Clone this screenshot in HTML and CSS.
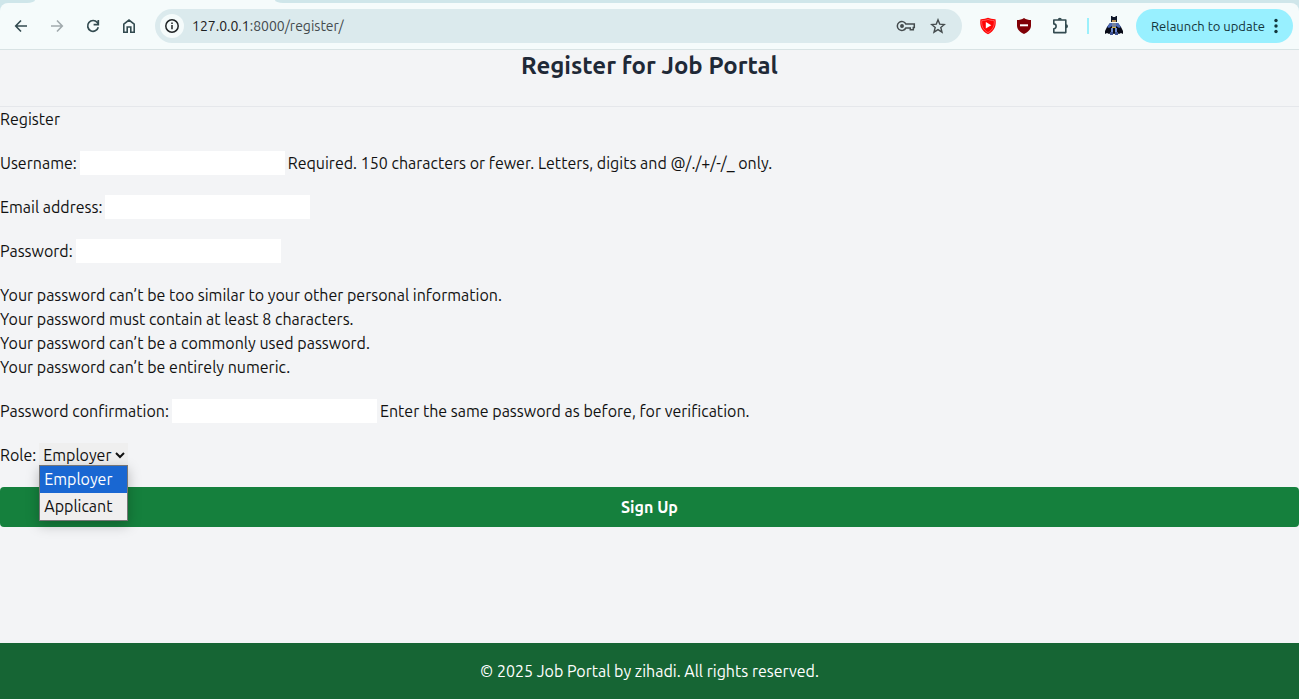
FILE: index.html
```html
<!DOCTYPE html>
<html lang="en">
<head>
<meta charset="utf-8">
<title>Register for Job Portal</title>
<link rel="stylesheet" href="styles.css">
</head>
<body>
<div class="browser">
  <div class="tabstrip"><span class="tab-left"></span><span class="tab-right"></span></div>
  <div class="toolbar">
    <nav class="nav-buttons" aria-label="Browser navigation">
      <button class="icon-button" type="button" aria-label="Back"><svg width="16" height="16" viewBox="0 0 16 16" fill="none" stroke="currentColor" stroke-width="1.6"><path d="M14 8H3M8 2.5 2.7 8 8 13.5"/></svg></button>
      <button class="icon-button muted" type="button" aria-label="Forward"><svg width="16" height="16" viewBox="0 0 16 16" fill="none" stroke="currentColor" stroke-width="1.6"><path d="M2 8h11M8 2.5 13.3 8 8 13.5"/></svg></button>
      <button class="icon-button" type="button" aria-label="Reload"><svg width="16" height="16" viewBox="0 0 16 16" fill="none" stroke="currentColor" stroke-width="1.7"><path d="M13.3 9.3A5.4 5.4 0 1 1 12.3 4.5L13.3 5.8M13.3 2v4.700H8.600"/></svg></button>
      <button class="icon-button" type="button" aria-label="Home"><svg width="16" height="16" viewBox="0 0 16 16" fill="none" stroke="currentColor" stroke-width="1.6"><path d="M2.8 14.2V6.2L8 2.1l5.2 4.1v8H9.8V9H6.2v5.2z"/></svg></button>
    </nav>
    <div class="address">
      <span class="site-info"><svg width="16" height="16" viewBox="0 0 16 16" fill="none" stroke="currentColor" stroke-width="1.5"><circle cx="8" cy="8" r="6.2"/><path d="M8 7v4.3M8 4.4v1.5"/></svg></span>
      <span class="url"><span class="host">127.0.0.1</span>:8000/register/</span>
      <svg class="key" width="20" height="16" viewBox="0 0 20 16" fill="none" stroke="currentColor" stroke-width="1.5"><path d="M9.9 6.1H18.300V9.600H17.300V11.800H14.300V9.900H9.900A4.500 4.500 0 1 1 9.900 6.100z"/><circle cx="6" cy="8" r="1.200" fill="currentColor"/></svg>
      <svg width="16" height="16" viewBox="0 0 16 16" fill="none" stroke="currentColor" stroke-width="1.4"><path d="m8 1.800 1.700 4.300 4.700.4-3.600 3 1.200 4.700L8 11.700l-4 2.500 1.200-4.700-3.600-3 4.700-.4z"/></svg>
    </div>
    <div class="extensions">
      <svg width="18" height="18" viewBox="0 0 18 18"><path d="M9 .8C11 1.8 14 2.3 16.5 2.2 17.6 8.5 15.5 14 9 17.2 2.5 14 .4 8.5 1.5 2.2 4 2.3 7 1.8 9 .8z" fill="#ff0505"/><path d="M9 2.4c2 .9 4 1.2 6.2 1.2.6 5-1.2 9.2-6.2 12-5-2.8-6.8-7-6.2-12C5 3.6 7 3.3 9 2.4z" fill="none" stroke="#ff8a8a" stroke-width=".6"/><path d="M6.8 5v6.4L12.3 8.2z" fill="#fff"/></svg>
      <svg width="18" height="18" viewBox="0 0 18 18"><path d="M9 1c2 1.5 4.5 2 7 2v5.5c0 4-3 6.500-7 8.500-4-2-7-4.500-7-8.500V3c2.500 0 5-.5 7-2z" fill="#800006"/><path d="M5 7.300h8v2H5z" fill="#fff"/></svg>
      <svg class="puzzle" width="18" height="18" viewBox="0 0 18 18" fill="none" stroke="currentColor" stroke-width="1.6"><path d="M2.8 3h12v12.600h-12v-3.900c3.100-.2 3.100-4.600 0-4.800z" stroke-linejoin="round"/><path d="M6.800 2.800a2 2 0 0 1 4 0zM15 7.300a2 2 0 0 1 0 4z" fill="currentColor" stroke="none"/></svg>
      <span class="divider"></span>
      <svg class="avatar" width="20" height="20" viewBox="0 0 20 20"><path d="M7 0h1l1 1h2l1-1h1v6H7z" fill="#10182a"/><path d="M8 4h4v2H8z" fill="#b8915a"/><path d="M6 7 3 11 1 15v3l2-1 2 1 2-1 3 1 3-1 2 1 2-1 2 1v-3l-2-4-3-4z" fill="#080b17"/><path d="M6 7 3 11l2 1 3-2V7zm6 0v3l3 2 2-1-3-4z" fill="#4b68b7"/><path d="M8 7h4v4H8z" fill="#77839c"/><path d="M8 11h4v1H8z" fill="#d8b64b"/><path d="M7 12h2v4H7zm4 0h2v4h-2z" fill="#6f8bd0"/><path d="M6 16h3v3H6zm5 0h3v3h-3z" fill="#3c5192"/></svg>
    </div>
    <button class="relaunch" type="button">Relaunch to update<svg width="4" height="16" viewBox="0 0 4 16" fill="currentColor"><circle cx="2" cy="2.5" r="1.7"/><circle cx="2" cy="8" r="1.7"/><circle cx="2" cy="13.5" r="1.7"/></svg></button>
  </div>
</div>
<header class="page-header"><h1>Register for Job Portal</h1></header>
<main>
  <form class="register-form">
    <p>Register</p>
    <div class="row"><label for="username">Username:</label><input id="username" type="text"><span>Required. 150 characters or fewer. Letters, digits and @/./+/-/_ only.</span></div>
    <div class="row"><label for="email">Email address:</label><input id="email" type="email"></div>
    <div class="row"><label for="password">Password:</label><input id="password" type="password"></div>
    <ul class="rules">
      <li>Your password can’t be too similar to your other personal information.</li>
      <li>Your password must contain at least 8 characters.</li>
      <li>Your password can’t be a commonly used password.</li>
      <li>Your password can’t be entirely numeric.</li>
    </ul>
    <div class="row"><label for="confirm">Password confirmation:</label><input id="confirm" type="password"><span>Enter the same password as before, for verification.</span></div>
    <div class="row"><label for="role">Role:</label>
      <div class="role-picker">
        <select id="role"><option selected>Employer</option><option>Applicant</option></select>
        <ul class="options" role="listbox" aria-label="Role"><li class="selected" role="option" aria-selected="true">Employer</li><li role="option" aria-selected="false">Applicant</li></ul>
      </div>
    </div>
    <button class="submit" type="submit">Sign Up</button>
  </form>
</main>
<footer class="page-footer">© 2025 Job Portal by zihadi. All rights reserved.</footer>
</body>
</html>
```
FILE: styles.css
```css
* { box-sizing: border-box; }
body {
  margin: 0;
  min-height: 100vh;
  display: flex;
  flex-direction: column;
  background: #f3f4f6;
  color: #111;
  font: 16px/24px Ubuntu, "Noto Sans", sans-serif;
}
h1, p, ul { margin: 0; padding: 0; }
ul { list-style: none; }
button, input, select { font: inherit; color: inherit; border: 0; }
svg { display: block; flex: none; }

.browser { background: #cfe6ea; border-bottom: 1px solid #d8e3e4; }
.tabstrip { height: 3px; display: flex; justify-content: space-between; background: #f5fbfb; }
.tab-left { width: 35px; background: #cfe6ea; border-bottom-right-radius: 8px 3px; }
.tab-right { width: calc(100% - 275px); background: #cfe6ea; border-bottom-left-radius: 8px 3px; }
.toolbar {
  display: flex;
  align-items: center;
  height: 46px;
  padding: 0 6px 0 3px;
  background: #f5fbfb;
  border-radius: 8px 8px 0 0;
  color: #334b50;
}
.nav-buttons { display: flex; }
.icon-button {
  width: 36px;
  height: 34px;
  padding: 0;
  display: grid;
  place-items: center;
  background: none;
}
.muted { color: #a1aaad; }
.address {
  flex: 1;
  display: flex;
  align-items: center;
  height: 34px;
  margin-left: 8px;
  padding: 0 16px 0 5px;
  border-radius: 17px;
  background: #dbeaed;
  color: #444b4d;
}
.site-info {
  width: 24px;
  height: 24px;
  display: grid;
  place-items: center;
  border-radius: 50%;
  background: #f5fbfb;
  color: #202426;
}
.url { flex: 1; margin-left: 8px; font-size: 14px; }
.host { color: #1d2022; }
.key { margin-right: 14px; }
.extensions { display: flex; align-items: center; gap: 18px; padding: 0 12px 0 17px; }
.divider { width: 2px; height: 16px; background: #9bf0fb; }
.avatar { margin-left: -3px; }
.relaunch {
  display: flex;
  align-items: center;
  justify-content: space-between;
  width: 157px;
  height: 34px;
  padding: 0 15px;
  border-radius: 17px;
  background: #98f0ff;
  color: #12353c;
  font-size: 13px;
  white-space: nowrap;
}

.page-header { padding-bottom: 24px; border-bottom: 1px solid #e5e7eb; text-align: center; }
h1 { color: #1f2937; font-size: 24px; line-height: 32px; font-weight: 600; }
main { flex: 1; }
.register-form { display: flex; flex-direction: column; gap: 20px; }
.row { display: flex; align-items: center; gap: 3px; }
.row input { width: 205px; height: 24px; padding: 0; background: #fff; }
.role-picker { position: relative; }
select { display: block; width: 89px; height: 24px; padding: 0; background: #efefef; }
.options {
  position: absolute;
  top: 22px;
  left: 0;
  width: 89px;
  border: 1px solid #767676;
  background: #efefef;
  box-shadow: 0 4px 12px rgba(0, 0, 0, .25);
  line-height: 27px;
}
.options li { padding: 0 4px; }
.options .selected { background: #1967d2; color: #fff; }
.submit {
  width: 100%;
  padding: 8px 16px;
  border-radius: 4px;
  background: #15803d;
  color: #fff;
  font-weight: 600;
}
.page-footer { padding: 16px; background: #166534; color: #fff; text-align: center; }
```
